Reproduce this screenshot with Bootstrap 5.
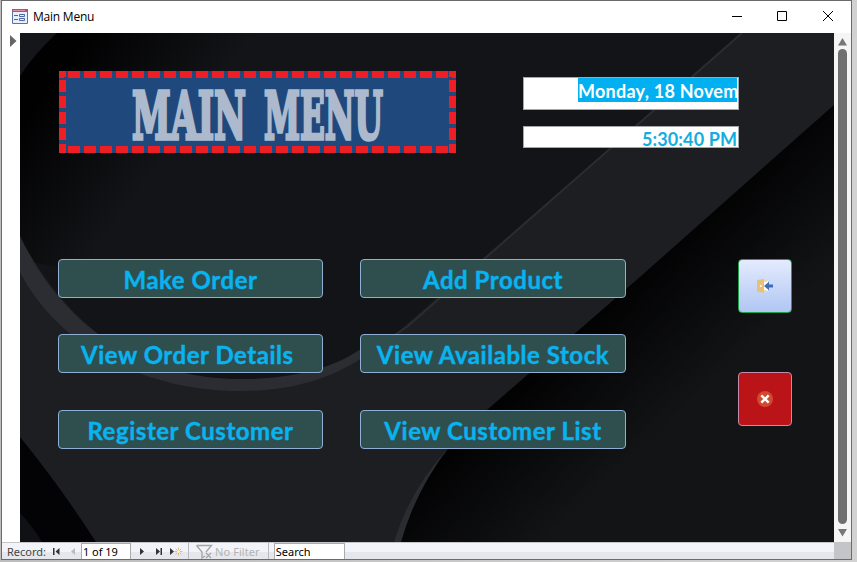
<!DOCTYPE html>
<html lang="en">
<head>
<meta charset="utf-8">
<title>Main Menu</title>
<link href="https://cdn.jsdelivr.net/npm/bootstrap@5.3.0/dist/css/bootstrap.min.css" rel="stylesheet">
<style>
body{background:linear-gradient(90deg,#bdbdbd,#d2d2d2);width:857px;height:562px;overflow:hidden;font-family:"Noto Sans","Open Sans",sans-serif;color:#000}
.win{width:851px;height:560px;margin-left:1px;border:1px solid #6b6b6b;background:#fff}
.titlebar{height:32px;padding:0 18px 2px 10px;font-size:12px}
.titlebar .caption{margin-left:5px;padding-top:2px;font-family:"Open Sans",sans-serif;letter-spacing:-.22px}
.mid{height:509px}
.selector{width:18px;padding:2px 0 0 8px}
.stage{width:814px;background:#131417;isolation:isolate;padding:38px 0 0 38px}
.backdrop{left:0;top:0;z-index:-1}
.scroller{width:17px;background:#f5f5f5;padding:5px 0}
.thumb{width:9px;background:#6f6f6f;border-radius:5px;margin:3px 0 5px}
.banner{width:397px;height:82px;margin-left:1px;font:bold 65px "DejaVu Serif",serif;
 background:
 linear-gradient(#ed1f24,#ed1f24) 0 0/7px 6px no-repeat,
 linear-gradient(#ed1f24,#ed1f24) 100% 0/7px 6px no-repeat,
 linear-gradient(#ed1f24,#ed1f24) 0 100%/7px 9px no-repeat,
 linear-gradient(#ed1f24,#ed1f24) 100% 100%/7px 9px no-repeat,
 repeating-linear-gradient(90deg,#ed1f24 0 5px,#1f497d 5px 9px,#ed1f24 9px 16px) 0 0/100% 7px no-repeat,
 repeating-linear-gradient(90deg,#ed1f24 0 5px,#1f497d 5px 9px,#ed1f24 9px 16px) 0 100%/100% 7px no-repeat,
 repeating-linear-gradient(180deg,#ed1f24 0 5px,#1f497d 5px 9px,#ed1f24 9px 16px) 0 0/7px 100% no-repeat,
 repeating-linear-gradient(180deg,#ed1f24 0 5px,#1f497d 5px 9px,#ed1f24 9px 16px) 100% 0/7px 100% no-repeat,#1f497d}
.clock{width:216px;margin:6px 0 0 67px;font:bold 18px Lato,sans-serif}
.field{background:#fff;border:1px solid #a6a6a6;padding-right:1px;white-space:nowrap}
.f-date{height:33px;margin-bottom:16px}
.f-time{height:22px;color:#12aee0;line-height:25px;letter-spacing:.1px}
.picked{background:#00b0f0;color:#fff;width:159px;height:24px;line-height:26px;letter-spacing:.25px;overflow:hidden}
.panel{padding-top:106px}
.menu-col{width:265px;gap:36px;margin-right:37px}
.menu-col.second{width:266px;margin-right:112px}
.mbtn{--bs-btn-padding-y:0;--bs-btn-padding-x:0;height:39px;border:1px solid #8fb0d2;border-radius:4px;background:#2f4f4f;color:#08b3f0;font:bold 24px/39px Lato,sans-serif;letter-spacing:.54px;-webkit-text-stroke:.4px #08b3f0;white-space:pre;overflow:hidden}
.mbtn:last-child{margin-top:1px}
.mbtn:hover{background:#2f4f4f;color:#08b3f0}
.tools{gap:59px}
.tool{width:54px;height:54px;padding:0;border-radius:4px}
.t-exit{border:1px solid #22a04c;background:linear-gradient(#e4ebfd,#b0c6f4)}
.t-close{border:1px solid #c48bab;background:#ba1419}
.status{height:17px;border-top:1px solid #c6c6c6;background:linear-gradient(#f2f4f9 0 55%,#e5e7ed 55%);font-size:11px;line-height:17px;color:#444;padding-left:5px;white-space:nowrap}
.st-box{background:#fff;border:1px solid #ababab;border-bottom:0;height:16px;line-height:16px;color:#000;padding-left:1px}
.st-pos{width:50px;margin-left:-1px;letter-spacing:-.05px}
.st-search{width:71px;margin-left:5px}
.nofilter{color:#b3b3b3;letter-spacing:.08px}
.corner{width:17px;height:17px;background:#c4c5c7;margin-top:-1px}
.divider{width:1px;height:16px;background:#b9bbc0}
</style>
<script src="https://cdn.jsdelivr.net/npm/bootstrap@5.3.0/dist/js/bootstrap.bundle.min.js"></script>
</head>
<body>
<div class="win">
 <header class="titlebar d-flex align-items-center">
  <svg width="16" height="15" viewBox="0 0 16 15"><path fill="#e9effa" stroke="#5872a8" d="M.5.5h15v14H.5z"/><path fill="#b8506e" d="M0 0h16v3H0z"/><path fill="#e08da0" d="M1 1h12v1H1z"/><path stroke="#4c69a5" fill="none" d="M2 6.500h4M2 10.500h4M7.500 5.500h5v2h-5zM7.500 9.500h5v2h-5z"/></svg>
  <span class="caption">Main Menu</span>
  <svg class="ms-auto" width="102" height="12" viewBox="0 0 102 12" fill="none" stroke="#000"><path d="M1 6.500h10M46.500 1.500h9v9h-9zM92 1l10 10M102 1l-10 10"/></svg>
 </header>
 <main class="mid d-flex">
  <div class="selector"><svg class="d-block" width="7" height="12"><path d="M0 0l6.500 6L0 12z" fill="#666"/></svg></div>
  <section class="stage position-relative flex-shrink-0">
   <svg class="backdrop position-absolute" width="814" height="509" viewBox="20 33 814 509">
    <defs>
     <linearGradient id="right" gradientUnits="userSpaceOnUse" x1="610" y1="300" x2="700" y2="395"><stop offset="0" stop-color="#020203"/><stop offset="1" stop-color="#131416"/></linearGradient>
     <linearGradient id="left" gradientUnits="userSpaceOnUse" x1="60" y1="70" x2="170" y2="150"><stop offset="0" stop-color="#010102"/><stop offset="1" stop-color="#131417"/></linearGradient>
    </defs>
    <path fill="url(#left)" d="M20 33H742L400 333 20 260z"/>
    <path fill="#14161a" d="M20 33h37Q35 53 20 76z"/>
    <path fill="#1d1e22" d="M20 237C70 330 145 383 240 383 320 383 355 360 400 330L742 33H834V105L640 277 487 410Q444 449 423 489 408 515 400 542H20z"/>
    <path fill="url(#right)" d="M834 105L640 277 487 410 449 447Q416 489 400 542H834z"/>
    <path fill="#2c2d32" d="M20 236C66 334 150 379 240 379 300 379 340 365 365 346L362 358C325 382 285 391 240 391 150 391 60 350 20 272z"/>
    <path fill="none" stroke="#2b2c30" stroke-width="2" d="M362 352Q385 343 408 326L742 33"/>
    <path fill="#2b2c31" d="M450 446Q410 489 394 542H401Q416 489 450 446z"/>
    <path fill="#030305" d="M20 437Q60 486 96 542H20z"/>
    <path fill="#101114" d="M20 513Q32 525 42 542H20z"/>
   </svg>
   <div class="d-flex">
    <div class="banner"><svg class="d-block" width="397" height="82" role="heading" fill="#adb9cc" stroke="#adb9cc" stroke-width="3.600"><text x="73" y="67.500" textLength="114" lengthAdjust="spacingAndGlyphs">MAIN</text><text x="205" y="67.500" textLength="119" lengthAdjust="spacingAndGlyphs">MENU</text></svg></div>
    <div class="clock">
     <div class="field f-date d-flex justify-content-end"><div class="picked">Monday, 18 Novem</div></div>
     <div class="field f-time text-end">5:30:40 PM</div>
    </div>
   </div>
   <div class="panel d-flex">
    <div class="menu-col d-flex flex-column">
     <button class="btn mbtn">Make Order</button>
     <button class="btn mbtn">View Order Details </button>
     <button class="btn mbtn">Register Customer</button>
    </div>
    <div class="menu-col second d-flex flex-column">
     <button class="btn mbtn">Add Product</button>
     <button class="btn mbtn">View Available Stock</button>
     <button class="btn mbtn">View Customer List</button>
    </div>
    <div class="tools d-flex flex-column">
     <button class="btn tool t-exit d-flex align-items-center justify-content-center" aria-label="Exit"><svg width="17" height="16" viewBox="0 0 17 16"><path fill="#fff" d="M7 3h4v10H7z"/><path fill="#e8c078" d="M0 2l7-1v14l-7-1.500z"/><path fill="#f0dca8" d="M7 2h3v2H7zM7 12h3v2H7z"/><circle cx="3.800" cy="8" r="1" fill="#fff"/><path fill="#3e6db5" d="M7 8l5-4.300v2.900h4v3h-4v2.700z"/></svg></button>
     <button class="btn tool t-close d-flex align-items-center justify-content-center" aria-label="Close"><svg width="16" height="16" viewBox="0 0 16 16"><circle cx="8" cy="8" r="8" fill="#d2492f"/><path stroke="#fff" stroke-width="2.500" d="M4.300 4.300l7.400 7.400M11.700 4.300l-7.400 7.400"/></svg></button>
    </div>
   </div>
  </section>
  <div class="scroller d-flex flex-column align-items-center">
   <svg width="9" height="8"><path d="M4.500 0L9 7.500H0z" fill="#777"/></svg>
   <div class="thumb flex-grow-1"></div>
   <svg width="9" height="8"><path d="M4.500 7.500L9 0H0z" fill="#777"/></svg>
  </div>
 </main>
 <footer class="status d-flex">
  <span>Record:</span>
  <svg width="36" height="16" viewBox="-7 0 36 16"><path fill="#333" d="M0 5h1.500v7H0zM6.500 5v7L2.500 8.500z"/><path fill="#bbb" d="M22 5v7l-4-3.500z"/></svg>
  <div class="st-box st-pos">1 of 19</div>
  <svg width="57" height="16" viewBox="0 0 57 16"><path fill="#333" d="M9 5v7l4-3.500zM25 5v7l4-3.500zM29.500 5H31v7h-1.500zM39 5v7l4-3.500z"/><path stroke="#e0a850" stroke-opacity=".75" d="M47.500 4.500v8M43.500 8.500h8M44.700 5.700l5.600 5.600M50.300 5.700l-5.600 5.600"/><circle cx="47.500" cy="8.500" r="1.500" fill="#fff3c0"/></svg>
  <div class="divider"></div>
  <svg width="26" height="16" viewBox="-7 0 26 16" fill="none" stroke="#a5a5a5" stroke-width="1.300"><path d="M.5 2.500h15L10 9M.5 2.500L6 9v6l3-2M10 10l5 5M15 10l-5 5"/></svg>
  <span class="nofilter">No Filter</span>
  <div class="divider ms-2"></div>
  <div class="st-box st-search">Search</div>
  <div class="corner ms-auto"></div>
 </footer>
</div>
</body>
</html>
